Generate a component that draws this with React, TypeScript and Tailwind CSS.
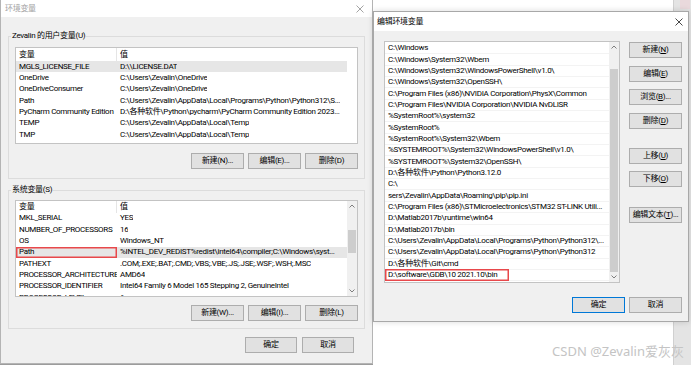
import React from "react";

const FONT = "font-['Roboto','Noto_Sans_CJK_SC',sans-serif]";
const TS = "text-[8px] tracking-[-0.3px]";

function CloseX({ color = "#333" }: { color?: string }) {
  return (
    <svg width="8" height="8" viewBox="0 0 8 8">
      <path d="M0.5 0.5 L7.5 7.5 M7.5 0.5 L0.5 7.5" stroke={color} strokeWidth="0.9" fill="none" />
    </svg>
  );
}

function Chevron({ up }: { up?: boolean }) {
  return (
    <svg width="6" height="4" viewBox="0 0 6 4">
      <path d={up ? "M0.5 3.5 L3 1 L5.5 3.5" : "M0.5 0.5 L3 3 L5.5 0.5"} stroke="#707070" strokeWidth="0.9" fill="none" />
    </svg>
  );
}

function Btn({ children, def = false, w = "w-[53px]" }: { children: React.ReactNode; def?: boolean; w?: string }) {
  return (
    <div
      className={`${w} h-[16px] flex items-center justify-center bg-[#e1e1e1] border ${
        def ? "border-[#0078d7]" : "border-[#adadad]"
      } ${TS} text-black leading-none whitespace-nowrap`}
    >
      {children}
    </div>
  );
}

type Row = { n: string; v: string; sel?: boolean; red?: boolean };

const userVars: Row[] = [
  { n: "MGLS_LICENSE_FILE", v: "D:\\\\LICENSE.DAT", sel: true },
  { n: "OneDrive", v: "C:\\Users\\Zevalin\\OneDrive" },
  { n: "OneDriveConsumer", v: "C:\\Users\\Zevalin\\OneDrive" },
  { n: "Path", v: "C:\\Users\\Zevalin\\AppData\\Local\\Programs\\Python\\Python312\\S..." },
  { n: "PyCharm Community Edition", v: "D:\\各种软件\\Python\\pycharm\\PyCharm Community Edition 2023..." },
  { n: "TEMP", v: "C:\\Users\\Zevalin\\AppData\\Local\\Temp" },
  { n: "TMP", v: "C:\\Users\\Zevalin\\AppData\\Local\\Temp" },
];

const sysVars: Row[] = [
  { n: "MKL_SERIAL", v: "YES" },
  { n: "NUMBER_OF_PROCESSORS", v: "16" },
  { n: "OS", v: "Windows_NT" },
  { n: "Path", v: "%INTEL_DEV_REDIST%redist\\intel64\\compiler;C:\\Windows\\syst...", sel: true, red: true },
  { n: "PATHEXT", v: ".COM;.EXE;.BAT;.CMD;.VBS;.VBE;.JS;.JSE;.WSF;.WSH;.MSC" },
  { n: "PROCESSOR_ARCHITECTURE", v: "AMD64" },
  { n: "PROCESSOR_IDENTIFIER", v: "Intel64 Family 6 Model 165 Stepping 2, GenuineIntel" },
  { n: "PROCESSOR_LEVEL", v: "6" },
];

const paths = [
  "C:\\Windows",
  "C:\\Windows\\System32\\Wbem",
  "C:\\Windows\\System32\\WindowsPowerShell\\v1.0\\",
  "C:\\Windows\\System32\\OpenSSH\\",
  "C:\\Program Files (x86)\\NVIDIA Corporation\\PhysX\\Common",
  "C:\\Program Files\\NVIDIA Corporation\\NVIDIA NvDLISR",
  "%SystemRoot%\\system32",
  "%SystemRoot%",
  "%SystemRoot%\\System32\\Wbem",
  "%SYSTEMROOT%\\System32\\WindowsPowerShell\\v1.0\\",
  "%SYSTEMROOT%\\System32\\OpenSSH\\",
  "D:\\各种软件\\Python\\Python3.12.0",
  "C:\\",
  "sers\\Zevalin\\AppData\\Roaming\\pip\\pip.ini",
  "C:\\Program Files (x86)\\STMicroelectronics\\STM32 ST-LINK Utili...",
  "D:\\Matlab2017b\\runtime\\win64",
  "D:\\Matlab2017b\\bin",
  "C:\\Users\\Zevalin\\AppData\\Local\\Programs\\Python\\Python312\\...",
  "C:\\Users\\Zevalin\\AppData\\Local\\Programs\\Python\\Python312",
  "D:\\各种软件\\Git\\cmd",
  "D:\\software\\GDB\\10 2021.10\\bin",
];

function VarList({ rows, scroll, header }: { rows: Row[]; scroll?: boolean; header: string }) {
  return (
    <div className="h-[97px] bg-white border border-[#c3c3c3] flex overflow-hidden">
      <div className={`w-[331px] flex flex-col ${TS} text-black`}>
        <div className={`${header} shrink-0 flex items-center`}>
          <div className="w-[101px] h-full pl-[3px] flex items-center border-r border-[#e5e5e5]">变量</div>
          <div className="pl-[3px]">值</div>
        </div>
        {rows.map((r) => (
          <div
            key={r.n}
            className={`h-[11.35px] shrink-0 flex items-center whitespace-nowrap ${r.sel ? "bg-[#e6e6e6]" : ""}`}
          >
            <div
              className={`w-[101px] h-full pl-[3px] flex items-center shrink-0 overflow-hidden ${
                r.red ? "ring-[1.5px] ring-inset ring-[#e8484b]" : ""
              }`}
            >
              {r.n}
            </div>
            <div className="pl-[3px] overflow-hidden">{r.v}</div>
          </div>
        ))}
      </div>
      {scroll ? (
        <div className="w-[10px] h-full bg-[#f0f0f0] flex flex-col items-center">
          <div className="h-[10px] flex items-center justify-center">
            <Chevron up />
          </div>
          <div className="mt-[19px] h-[23px] w-[8px] bg-[#cdcdcd]" />
          <div className="flex-1" />
          <div className="h-[10px] flex items-center justify-center">
            <Chevron />
          </div>
        </div>
      ) : (
        <div className="flex-1" />
      )}
    </div>
  );
}

function LeftDialog() {
  return (
    <div className="w-[373px] h-[364px] shrink-0 flex flex-col bg-[#f0f0f0] border-l border-r border-b border-[#b4b4b4]">
      <div className="h-[17px] shrink-0 bg-white flex items-center justify-between pl-[4px] pr-[8px]">
        <span className={`${TS} text-[#a3a3a3]`}>环境变量</span>
        <CloseX color="#9a9a9a" />
      </div>
      <fieldset className="mx-[7px] mt-[13px] border border-[#dcdcdc] p-0 min-w-0">
        <legend className={`ml-[2px] px-[1px] ${TS} leading-[12px] text-black`}>Zevalin 的用户变量(U)</legend>
        <div className="px-[6px] pt-[5px] pb-[9px]">
          <VarList rows={userVars} header="h-[13px]" />
          <div className="mt-[9px] flex justify-end gap-[4px]">
            <Btn>新建(N)...</Btn>
            <Btn>编辑(E)...</Btn>
            <Btn>删除(D)</Btn>
          </div>
        </div>
      </fieldset>
      <fieldset className="mx-[7px] mt-[5px] border border-[#dcdcdc] p-0 min-w-0">
        <legend className={`ml-[2px] px-[1px] ${TS} leading-[12px] text-black`}>系统变量(S)</legend>
        <div className="px-[6px] pt-[4px] pb-[7px]">
          <VarList rows={sysVars} scroll header="h-[11.5px]" />
          <div className="mt-[8px] flex justify-end gap-[4px]">
            <Btn>新建(W)...</Btn>
            <Btn>编辑(I)...</Btn>
            <Btn>删除(L)</Btn>
          </div>
        </div>
      </fieldset>
      <div className="mt-[8px] pr-[18px] flex justify-end gap-[5px]">
        <Btn w="w-[52px]">确定</Btn>
        <Btn w="w-[52px]">取消</Btn>
      </div>
    </div>
  );
}

function RightDialog() {
  return (
    <div className="absolute left-0 top-[11px] w-[316px] h-[311px] flex flex-col bg-[#f0f0f0] border border-[#a8a8a8] shadow-[0_0_6px_rgba(0,0,0,0.15)]">
      <div className="h-[19px] shrink-0 bg-white flex items-center justify-between pl-[3px] pr-[5px]">
        <span className={`${TS} text-black`}>编辑环境变量</span>
        <CloseX />
      </div>
      <div className="pl-[10px] pr-[6px] pt-[10px] flex gap-[9px]">
        <div className="w-[236px] h-[242px] bg-white border border-[#c3c3c3] flex overflow-hidden">
          <div className={`flex-1 flex flex-col ${TS} text-black pt-[1px] overflow-hidden`}>
            {paths.map((p, i) => (
              <div
                key={i}
                className="h-[11.35px] shrink-0 flex items-center whitespace-nowrap border-b border-[#f3f3f3]"
              >
                {i === paths.length - 1 ? (
                  <span className="w-[124px] h-[12px] pl-[3px] flex items-center ring-[1.5px] ring-inset ring-[#e8484b]">
                    {p}
                  </span>
                ) : (
                  <span className="pl-[3px]">{p}</span>
                )}
              </div>
            ))}
          </div>
          <div className="w-[10px] h-full shrink-0 bg-[#f0f0f0] flex flex-col items-center">
            <div className="h-[10px] flex items-center justify-center">
              <Chevron up />
            </div>
            <div className="mt-[17px] flex-1 w-[8px] bg-[#cdcdcd]" />
            <div className="h-[10px] flex items-center justify-center">
              <Chevron />
            </div>
          </div>
        </div>
        <div className="flex flex-col pt-[1px]">
          <Btn>
            新建(<u>N</u>)
          </Btn>
          <div className="mt-[8px]">
            <Btn>
              编辑(<u>E</u>)
            </Btn>
          </div>
          <div className="mt-[7px]">
            <Btn>
              浏览(<u>B</u>)...
            </Btn>
          </div>
          <div className="mt-[8px]">
            <Btn>
              删除(<u>D</u>)
            </Btn>
          </div>
          <div className="mt-[19px]">
            <Btn>
              上移(<u>U</u>)
            </Btn>
          </div>
          <div className="mt-[7px]">
            <Btn>
              下移(<u>O</u>)
            </Btn>
          </div>
          <div className="mt-[20px]">
            <Btn>
              编辑文本(<u>T</u>)...
            </Btn>
          </div>
        </div>
      </div>
      <div className="mt-[14px] pr-[6px] flex justify-end gap-[4px]">
        <Btn def>确定</Btn>
        <Btn>取消</Btn>
      </div>
    </div>
  );
}

export default function App() {
  return (
    <div className={`w-[691px] h-[365px] flex bg-[#9c9c9c] overflow-hidden ${FONT}`}>
      <LeftDialog />
      <div className="relative flex-1 h-full flex">
        <div className="w-[300px] h-full bg-white" />
        <div className="flex-1 h-full bg-[#e4e4e4] border-l border-[#d0d0d0] flex flex-col">
          <div className="h-[9px] w-[10px] ml-[6px] bg-[#e9d9dc]" />
        </div>
        <RightDialog />
        <div className="absolute right-[7px] bottom-[7px] text-[13px] leading-none text-[#c4c4c4] font-['Noto_Sans','Noto_Sans_CJK_SC',sans-serif]">
          CSDN @Zevalin爱灰灰
        </div>
      </div>
    </div>
  );
}
